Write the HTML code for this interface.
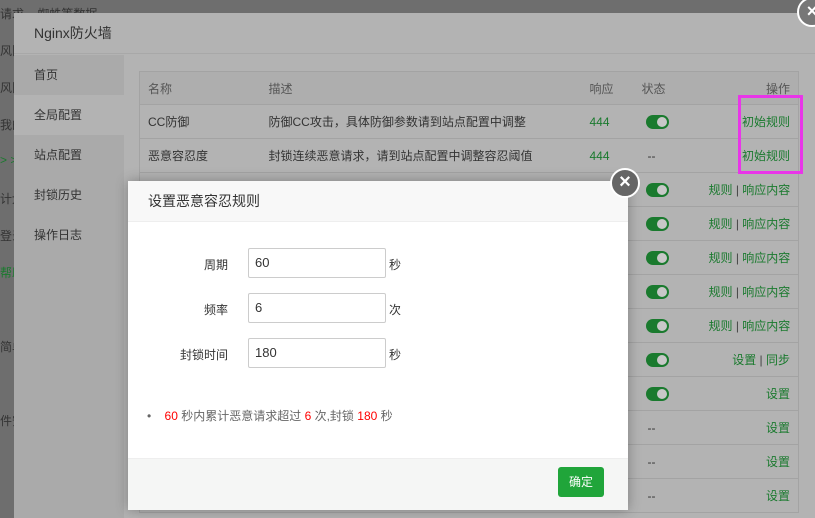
<!DOCTYPE html>
<html><head><meta charset="utf-8"><style>
*{margin:0;padding:0;box-sizing:border-box}
body{width:815px;height:518px;overflow:hidden;position:relative;background:#6e6e6e;font-family:"Liberation Sans","Noto Sans CJK SC",sans-serif;font-size:12px;color:#333}
.abs{position:absolute}
.bgtxt{position:absolute;left:0;font-size:12px;color:#333;white-space:nowrap}
.outer{position:absolute;left:14px;top:13px;width:801px;height:505px;background:#b3b3b3}
.ohead{height:41px;border-bottom:1px solid #a8a8a8;font-size:14px;line-height:41px;padding-left:20px;color:#333}
.side{position:absolute;left:0;top:42px;width:110px;height:463px;background:#aaaaaa}
.side div{height:40px;line-height:40px;padding-left:20px;font-size:12px;color:#333}
.side .on{background:#b3b3b3}
table{position:absolute;left:125px;top:58px;width:659px;border-collapse:collapse;border:1px solid #a3a3a3;table-layout:fixed}
td,th{height:34px;border-bottom:1px solid #a3a3a3;padding:0 8px;text-align:left;font-weight:normal;white-space:nowrap;overflow:visible}
th{background:#aeaeae;color:#555;height:33px}
.g{color:#1a7a2e}
.r{text-align:right}
.d{padding-left:14px}
.tg{display:inline-block;width:23px;height:14px;border-radius:7px;background:#1a7a2e;position:relative;vertical-align:middle;margin-left:4px}
.tg:after{content:"";position:absolute;right:2px;top:2px;width:10px;height:10px;border-radius:50%;background:#c8c8c8}
.sep{color:#444}
.dlg{position:absolute;left:128px;top:181px;width:500px;height:329px;background:#fff;box-shadow:0 0 12px rgba(0,0,0,.3)}
.dh{height:41px;background:#f8f8f8;border-bottom:1px solid #eee;font-size:14px;line-height:41px;padding-left:20px;color:#333}
.lbl{position:absolute;width:100px;text-align:right;font-size:12px;color:#333}
.inp{position:absolute;left:120px;width:138px;height:30px;border:1px solid #ccc;border-radius:2px;line-height:28px;padding-left:6px;font-size:13px;color:#333}
.unit{position:absolute;left:261px;font-size:12px}
.df{position:absolute;left:0;bottom:0;width:500px;height:52px;background:#f5f6f5;border-top:1px solid #eee}
.btn{position:absolute;right:24px;top:8px;width:46px;height:30px;background:#20a53a;color:#fff;border-radius:3px;text-align:center;line-height:30px;font-size:12px}
.x{position:absolute;border-radius:50%;background:#666;border:2px solid #fff;color:#fff;text-align:center;font-weight:bold}
</style></head><body>
<div class="bgtxt" style="top:5px">请求&nbsp;&nbsp;&nbsp;&nbsp;蜘蛛等数据</div>
<div class="bgtxt" style="top:42px">风险</div>
<div class="bgtxt" style="top:79px">风险</div>
<div class="bgtxt" style="top:116px">我的</div>
<div class="bgtxt" style="top:153px;color:#1a7a2e">&gt; &gt;</div>
<div class="bgtxt" style="top:190px">计划</div>
<div class="bgtxt" style="top:227px">登录</div>
<div class="bgtxt" style="top:264px;color:#1a7a2e">帮助</div>
<div class="bgtxt" style="top:338px">简单</div>
<div class="bgtxt" style="top:412px">件安</div>
<div class="outer">
<div class="ohead">Nginx防火墙</div>
<div class="side"><div>首页</div><div class="on">全局配置</div><div>站点配置</div><div>封锁历史</div><div>操作日志</div></div>
<table>
<colgroup><col style="width:121px"><col style="width:321px"><col style="width:52px"><col style="width:67px"><col style="width:98px"></colgroup>
<tr><th>名称</th><th>描述</th><th>响应</th><th>状态</th><th class="r">操作</th></tr>
<tr><td>CC防御</td><td>防御CC攻击，具体防御参数请到站点配置中调整</td><td class="g">444</td><td><span class="tg"></span></td><td class="r g">初始规则</td></tr>
<tr><td>恶意容忍度</td><td>封锁连续恶意请求，请到站点配置中调整容忍阈值</td><td class="g">444</td><td class="d">--</td><td class="r g">初始规则</td></tr>
<tr><td></td><td></td><td></td><td><span class="tg"></span></td><td class="r g">规则 <span class="sep">|</span> 响应内容</td></tr>
<tr><td></td><td></td><td></td><td><span class="tg"></span></td><td class="r g">规则 <span class="sep">|</span> 响应内容</td></tr>
<tr><td></td><td></td><td></td><td><span class="tg"></span></td><td class="r g">规则 <span class="sep">|</span> 响应内容</td></tr>
<tr><td></td><td></td><td></td><td><span class="tg"></span></td><td class="r g">规则 <span class="sep">|</span> 响应内容</td></tr>
<tr><td></td><td></td><td></td><td><span class="tg"></span></td><td class="r g">规则 <span class="sep">|</span> 响应内容</td></tr>
<tr><td></td><td></td><td></td><td><span class="tg"></span></td><td class="r g">设置 <span class="sep">|</span> 同步</td></tr>
<tr><td></td><td></td><td></td><td><span class="tg"></span></td><td class="r g">设置</td></tr>
<tr><td></td><td></td><td></td><td class="d">--</td><td class="r g">设置</td></tr>
<tr><td></td><td></td><td></td><td class="d">--</td><td class="r g">设置</td></tr>
<tr><td></td><td></td><td></td><td class="d">--</td><td class="r g">设置</td></tr>
</table>
</div>
<div class="abs" style="left:738px;top:95px;width:65px;height:79px;border:3px solid #e935e9"></div>
<div class="x" style="left:797px;top:-3px;width:30px;height:30px;line-height:24px;font-size:18px;background:#777">×</div>
<div class="dlg">
<div class="dh">设置恶意容忍规则</div>
<div class="lbl" style="left:0;top:75px">周期</div><div class="inp" style="top:67px">60</div><div class="unit" style="top:75px">秒</div>
<div class="lbl" style="left:0;top:120px">频率</div><div class="inp" style="top:112px">6</div><div class="unit" style="top:120px">次</div>
<div class="lbl" style="left:0;top:165px">封锁时间</div><div class="inp" style="top:157px">180</div><div class="unit" style="top:165px">秒</div>
<div class="abs" style="left:19px;top:226px;color:#666;font-size:12px">•&nbsp;&nbsp;&nbsp;&nbsp;<span style="color:#f00">60</span> 秒内累计恶意请求超过 <span style="color:#f00">6</span> 次,封锁 <span style="color:#f00">180</span> 秒</div>
<div class="df"><div class="btn">确定</div></div>
</div>
<div class="x" style="left:610px;top:168px;width:30px;height:30px;line-height:25px;font-size:20px">×</div>
</body></html>
